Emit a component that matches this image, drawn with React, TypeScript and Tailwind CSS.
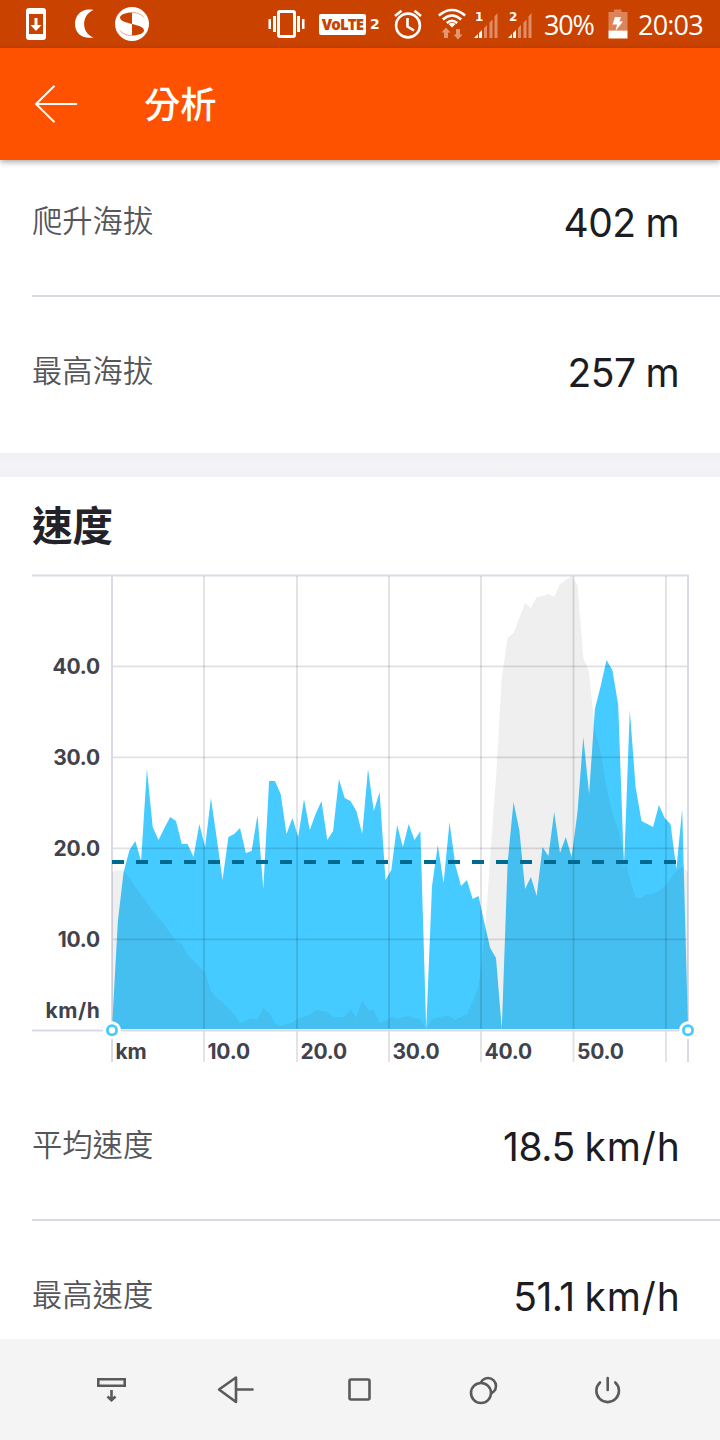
import React from "react";

/* ---------------------------
   Chart data: heights in px above the baseline
--------------------------- */
const SPEED = [
    0, 108, 158, 180, 189, 169, 261, 203, 190, 202, 213, 209, 186, 186, 173,
    206, 183, 232, 192, 150, 193, 196, 202, 177, 179, 215, 141, 249, 249, 236,
    196, 212, 193, 231, 200, 216, 229, 190, 199, 251, 232, 229, 219, 196, 261,
    219, 238, 150, 160, 205, 183, 206, 190, 199, 1, 144, 185, 147, 208, 165,
    144, 150, 131, 134, 107, 82, 72, 1, 167, 228, 200, 141, 153, 134, 183, 174,
    218, 177, 193, 173, 218, 293, 236, 321, 344, 370, 360, 325, 162, 320, 243,
    209, 206, 203, 225, 212, 206, 161, 221, 0,
];

const ELEVATION = [
    158, 160, 159, 152, 143, 135, 127, 119, 112, 105, 97, 89, 86, 75, 69, 63,
    58, 39, 32, 28, 22, 15, 7, 9, 12, 10, 22, 17, 7, 4, 6, 7, 12, 13, 15, 20,
    19, 18, 13, 13, 13, 21, 12, 30, 20, 20, 7, 9, 13, 11, 13, 14, 12, 11, 1,
    11, 12, 14, 14, 10, 13, 16, 28, 43, 90, 173, 252, 352, 392, 397, 412, 427,
    422, 433, 434, 436, 433, 446, 450, 454, 445, 372, 358, 300, 278, 242, 217,
    200, 175, 151, 132, 132, 136, 136, 139, 144, 151, 159, 163, 158,
];

const LEFT = 112;
const RIGHT = 688;
const TOP = 15;
const BASE = 470;

function areaPath(values: number[]) {
    const step = (RIGHT - LEFT) / (values.length - 1);
    const points = values.map(
        (v, i) => `${(LEFT + i * step).toFixed(1)},${Math.min(BASE - v, BASE - 1)}`
    );
    return `M${LEFT},${BASE - 1} L${points.join(" L")} L${RIGHT},${BASE - 1} Z`;
}

const Y_LABELS = [
    { text: "40.0", y: 106 },
    { text: "30.0", y: 197 },
    { text: "20.0", y: 288 },
    { text: "10.0", y: 379 },
];

const X_LABELS = [
    { text: "km", x: 112 },
    { text: "10.0", x: 204 },
    { text: "20.0", x: 297 },
    { text: "30.0", x: 389 },
    { text: "40.0", x: 481 },
    { text: "50.0", x: 573.5 },
];

function SpeedChart() {
    return (
        <svg
            width="720"
            height="510"
            viewBox="0 0 720 510"
            className="block font-['Inter',sans-serif] text-[21px] font-[650] tracking-[-0.2px]"
        >
            {/* ejes */}
            <g stroke="#dadae6" strokeWidth="2">
                <path d={`M32 ${TOP + 0.5}H689`} />
                <path d={`M32 ${BASE + 0.5}H689`} />
                <path d={`M${LEFT} ${TOP}V502`} />
                <path d={`M${RIGHT} ${TOP}V502`} />
            </g>

            <path d={areaPath(SPEED)} fill="#45cbff" />
            <path d={areaPath(ELEVATION)} fill="#3a3030" fillOpacity="0.08" />

            {/* rejilla */}
            <g stroke="#000" strokeOpacity="0.12">
                {Y_LABELS.map((l) => (
                    <path key={l.text} d={`M113 ${l.y + 0.4}H687`} strokeWidth="1.8" />
                ))}
                {[204, 297, 389, 481, 573.5, 666].map((x) => (
                    <path
                        key={x}
                        d={`M${x} ${TOP + 1}V${BASE - 1}M${x} ${BASE + 1.5}V502`}
                        strokeWidth="1.8"
                    />
                ))}
            </g>

            <path
                d="M112 302H678"
                stroke="#00698f"
                strokeWidth="4"
                strokeDasharray="12 12"
            />

            {[LEFT, RIGHT].map((x) => (
                <g key={x}>
                    <circle cx={x} cy={BASE + 0.3} r="9" fill="#fff" />
                    <circle
                        cx={x}
                        cy={BASE + 0.3}
                        r="4.6"
                        fill="#fff"
                        stroke="#45cbff"
                        strokeWidth="2.8"
                    />
                </g>
            ))}

            <g fill="#42424c">
                {Y_LABELS.map((l) => (
                    <text key={l.text} x="100" y={l.y + 8} textAnchor="end">
                        {l.text}
                    </text>
                ))}
                <text x="100.5" y="458" textAnchor="end" className="tracking-[0.6px]">
                    km/h
                </text>
                {X_LABELS.map((l) => (
                    <text key={l.text} x={l.x + 3.5} y="498.5">
                        {l.text}
                    </text>
                ))}
            </g>
        </svg>
    );
}

/* ---------------------------
   Status bar
--------------------------- */
function SignalIcon({ sim }: { sim: string }) {
    return (
        <svg width="26" height="34" viewBox="0 0 26 34" className="shrink-0">
            <text
                x="1"
                y="13.5"
                fill="#fff"
                className="font-['DejaVu_Sans',sans-serif] text-[12px] font-bold"
            >
                {sim}
            </text>
            <path d="M0 31L4 27V31ZM5 26L8 23V31H5Z" fill="#fff" />
            <path
                d="M10 21L13 18V31H10ZM15.500 15.500L18.500 12.500V31H15.500ZM20.500 9.500L23.500 6V31H20.500Z"
                fill="#fff"
                fillOpacity="0.4"
            />
        </svg>
    );
}

function StatusBar() {
    return (
        <div className="flex h-12 items-center bg-[#ca4200] text-white">
            <svg width="20" height="32" viewBox="0 0 20 32" className="ml-[26px]">
                <rect width="20" height="32" rx="3" fill="#fff" />
                <path d="M3 6H17V26H3Z" fill="#ca4200" />
                <path d="M8.5 10H11.5V17H15.5L10 23L4.5 17H8.5Z" fill="#fff" />
            </svg>
            <svg width="20" height="30" viewBox="0 0 20 30" className="ml-[29px]">
                <path
                    d="M18.5 1C7 -1.500 0 6 0 15C0 24 7 30.500 18.500 28.500C6 24 6 6 18.500 1Z"
                    fill="#fff"
                />
            </svg>
            <svg width="34" height="34" viewBox="0 0 34 34" className="ml-5">
                <circle cx="17" cy="17" r="17" fill="#fff" />
                <path d="M17 17V5.500C10 5.500 5 8 5 10.500C5 14 11 15.500 17 17Z" fill="#ca4200" />
                <path d="M17 17V28.500C24 28.500 29 26 29 23.500C29 20 23 18.500 17 17Z" fill="#ca4200" />
                <path
                    d="M17 5.500C22 5.500 27 7.500 29 10.500M17 28.500C12 28.500 7 26.500 5 23.500"
                    fill="none"
                    stroke="#ca4200"
                    strokeOpacity="0.6"
                    strokeWidth="0.8"
                />
            </svg>

            <svg width="38" height="28" viewBox="0 0 38 28" className="ml-[119px]">
                <rect x="10.500" y="1.500" width="16" height="25" rx="1.500" fill="none" stroke="#fff" strokeWidth="3" />
                <path d="M5 6H8V22H5ZM0.500 9H3V19H0.500ZM29 6H32V22H29ZM34 9H36.500V19H34Z" fill="#fff" />
            </svg>
            <div className="ml-[13px] flex h-[21px] w-[47px] items-center justify-center rounded-[2px] bg-white">
                <span className="font-['Open_Sans',sans-serif] text-[15px] leading-none font-extrabold tracking-[-0.9px] text-[#ca4200]">
                    VoLTE
                </span>
            </div>
            <span className="ml-[4px] w-[12px] font-['DejaVu_Sans',sans-serif] text-[14px] leading-none font-bold">
                2
            </span>
            <svg width="30" height="30" viewBox="0 0 30 30" className="ml-[11px] shrink-0">
                <g fill="none" stroke="#fff" strokeWidth="2.600">
                    <circle cx="15" cy="16.500" r="11.900" />
                    <path d="M2 7L8.500 1.800M28 7L21.500 1.800M14.500 9V17.500L21 21.500" />
                </g>
            </svg>
            <svg width="28" height="34" viewBox="0 0 28 34" className="ml-[15px] shrink-0">
                <g fill="none" stroke="#fff" strokeWidth="2.600">
                    <path d="M0.800 8.500Q14 -2.500 27.200 8.500" />
                    <path d="M4.800 12.500Q14 4.500 23.200 12.500" />
                    <path d="M8.800 16Q14 11.500 19.200 16" />
                </g>
                <path d="M10.500 17Q14 14.500 17.500 17L14 20.500Z" fill="#fff" />
                <path
                    d="M8 20.500L12.500 25.500H10V31H6V25.500H3.500ZM20 32.500L24.500 27.500H22V22H18V27.500H15.500Z"
                    fill="#fff"
                    fillOpacity="0.45"
                />
            </svg>
            <div className="ml-[8px] flex gap-[8px]">
                <SignalIcon sim="1" />
                <SignalIcon sim="2" />
            </div>
            <span className="ml-[10px] w-[52px] font-['Open_Sans',sans-serif] text-[27px] leading-none tracking-[-1.2px]">
                30%
            </span>
            <svg width="20" height="30" viewBox="0 0 20 30" className="ml-[12px] shrink-0">
                <path d="M0.500 3H6V0.500H13.500V3H19.500V21.500H0.500Z" fill="#fff" fillOpacity="0.35" />
                <path d="M0.500 21.500H19.500V29.500H0.500Z" fill="#fff" />
                <path d="M7 8H13L11.500 12.500H15L7.500 22L9 15.500H4.500Z" fill="#fff" />
            </svg>
            <span className="ml-[10px] whitespace-nowrap font-['Open_Sans',sans-serif] text-[27px] leading-none tracking-[-0.8px]">
                20:03
            </span>
        </div>
    );
}

function Header() {
    return (
        <header className="relative flex h-28 items-center bg-[#ff5200] text-white shadow-[0_2px_6px_rgba(0,0,0,0.35)]">
            <svg
                width="44"
                height="38"
                viewBox="0 0 44 38"
                fill="none"
                stroke="#fff"
                strokeWidth="1.900"
                className="ml-[34px]"
            >
                <path d="M43 19H2M20.500 0.800L2 19L20.500 37.200" />
            </svg>
            <h1 className="ml-[66px] pb-1 font-['Noto_Sans_CJK_TC',sans-serif] text-[36.3px] leading-none font-medium">
                分析
            </h1>
        </header>
    );
}

/* ---------------------------
   Rows
--------------------------- */
type StatRowProps = { label: string; value: string; unit: string };

function StatRow({ label, value, unit }: StatRowProps) {
    return (
        <div className="flex h-[148px] items-center justify-between pr-[39.5px]">
            <span className="pb-1 font-['Noto_Sans_CJK_TC',sans-serif] text-[30.3px] leading-none font-[350] text-[#55555a]">
                {label}
            </span>
            <div className="flex gap-2.5 pt-0.5 font-['Inter',sans-serif] text-[39px] leading-none text-[#1c1c22]">
                <span className="tracking-[-0.5px]">{value}</span>
                <span className="tracking-[0.8px]">{unit}</span>
            </div>
        </div>
    );
}

function NavBar() {
    return (
        <nav className="relative flex h-[101px] shrink-0 items-center justify-between bg-[#f4f4f4] pr-[92px] pl-[91px]">
            <svg width="40" height="40" viewBox="0 0 40 40" fill="none" stroke="#5a5a5a" strokeWidth="2.600">
                <path d="M7.300 9.300H33.700V15.700H7.300ZM20.500 20V30M16.500 26.500L20.500 30.300L24.500 26.500" />
            </svg>
            <svg width="40" height="40" viewBox="0 0 40 40" fill="none" stroke="#5a5a5a" strokeWidth="2.600" strokeLinejoin="round" strokeLinecap="round">
                <path d="M21 7.500V32L4 19.500ZM21.500 19.500H37.500" />
            </svg>
            <svg width="40" height="40" viewBox="0 0 40 40" fill="none" stroke="#5a5a5a" strokeWidth="2.600">
                <rect x="9.500" y="9.500" width="20" height="20" rx="1.500" />
            </svg>
            <svg width="40" height="40" viewBox="0 0 40 40" fill="none" stroke="#5a5a5a" strokeWidth="2.600">
                <circle cx="24" cy="16" r="8" />
                <circle cx="17" cy="23" r="10" fill="#f4f4f4" />
            </svg>
            <svg width="40" height="40" viewBox="0 0 40 40" fill="none" stroke="#5a5a5a" strokeWidth="2.600" strokeLinecap="round">
                <path d="M12 12.500A11.300 11.300 0 1 0 27.300 12.500M19.700 8V20" />
            </svg>
        </nav>
    );
}

export default function App() {
    return (
        <div className="flex h-[1440px] w-[720px] flex-col overflow-hidden bg-white">
            <StatusBar />
            <Header />

            <main className="flex min-h-0 flex-1 flex-col overflow-hidden">
                <section className="h-[293px] shrink-0 pl-8">
                    <div className="-mt-[13px] border-b-2 border-[#dadae2]">
                        <StatRow label="爬升海拔" value="402" unit="m" />
                    </div>
                    <StatRow label="最高海拔" value="257" unit="m" />
                </section>

                <div className="h-6 shrink-0 bg-linear-to-b from-[#efeff4] via-[#f5f5f8] to-[#f1f1f5]" />

                <section className="shrink-0">
                    <h2 className="flex h-[83px] items-center pt-3 pl-8 font-['Noto_Sans_CJK_TC',sans-serif] text-[40.5px] leading-none font-bold text-[#222228]">
                        速度
                    </h2>
                    <SpeedChart />
                    <div className="pt-px pl-8">
                        <div className="border-b-2 border-[#dadae2]">
                            <StatRow label="平均速度" value="18.5" unit="km/h" />
                        </div>
                        <StatRow label="最高速度" value="51.1" unit="km/h" />
                    </div>
                </section>
            </main>

            <NavBar />
        </div>
    );
}
